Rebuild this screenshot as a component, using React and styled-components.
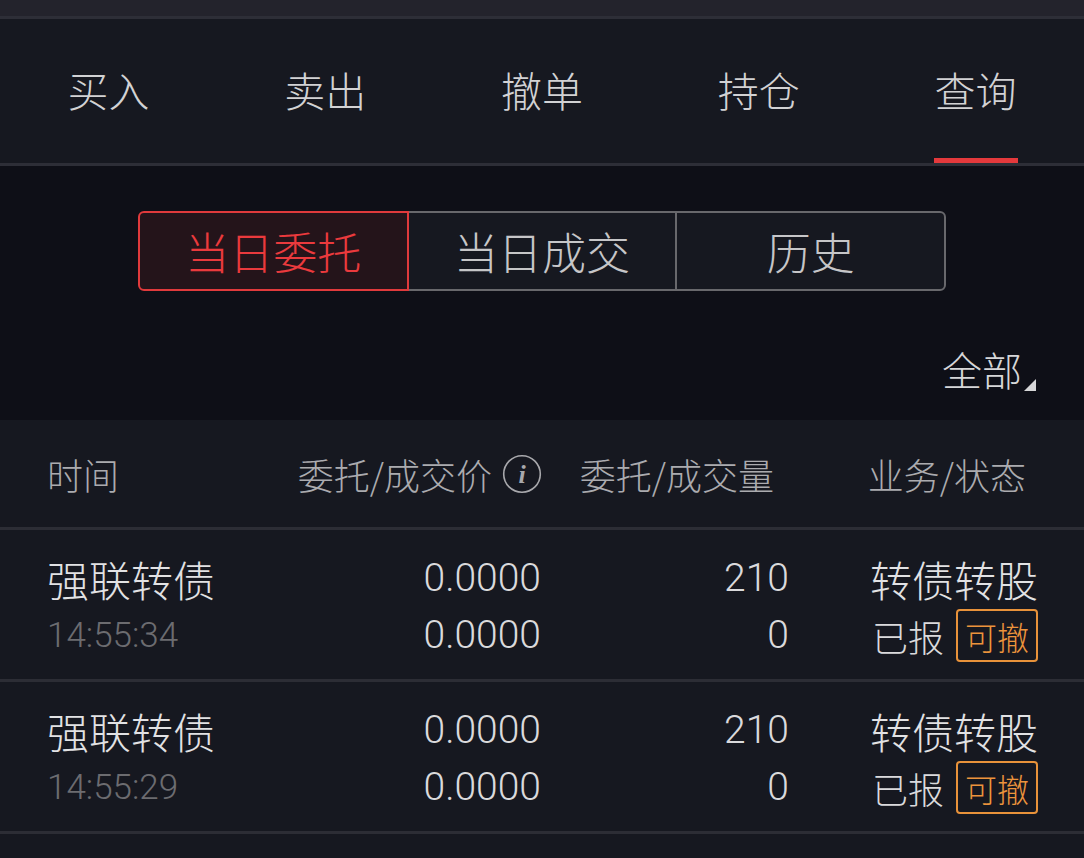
import styled, { createGlobalStyle } from "styled-components";

const GlobalStyle = createGlobalStyle`
  body {
    margin: 0;
    background: #161820;
    font-family: "Noto Sans CJK SC", "Noto Sans", sans-serif;
  }
`;

const CJK = `"Noto Sans CJK SC", "Noto Sans", sans-serif`;
const NUM = `Roboto, "Noto Sans CJK SC", sans-serif`;

const TABS = [ "买入", "卖出", "撤单", "持仓", "查询" ];
const SEGMENTS = [ "当日委托", "当日成交", "历史" ];
const ORDERS = [
    { name: "强联转债", time: "14:55:34", price: "0.0000", dealPrice: "0.0000", qty: "210", dealQty: "0", biz: "转债转股", state: "已报" },
    { name: "强联转债", time: "14:55:29", price: "0.0000", dealPrice: "0.0000", qty: "210", dealQty: "0", biz: "转债转股", state: "已报" },
];

function InfoIcon () {
    return (
        <svg width="40" height="40" viewBox="0 0 40 40">
            <circle cx="20" cy="20" r="18.3" fill="none" stroke="#a8a8ac" strokeWidth="1.6" />
            <text x="20" y="29" textAnchor="middle" fill="#a8a8ac" fontFamily="'Liberation Serif', serif" fontStyle="italic" fontWeight="bold" fontSize="26">i</text>
        </svg>
    );
}

function App () {
    return (
        <Page>
            <GlobalStyle />
            <TopStrip />
            <TabBar>
                { TABS.map( ( t, i ) => (
                    <Tab key={ t } active={ i === 4 }>{ t }</Tab>
                ) ) }
            </TabBar>
            <FilterArea>
                <Segmented>
                    { SEGMENTS.map( ( s, i ) => (
                        <Segment key={ s } active={ i === 0 }>{ s }</Segment>
                    ) ) }
                </Segmented>
                <FilterRow>
                    <AllFilter>全部<Corner /></AllFilter>
                </FilterRow>
            </FilterArea>
            <HeaderRow>
                <HeadCell>时间</HeadCell>
                <HeadCell align="right">委托/成交价<InfoWrap><InfoIcon /></InfoWrap></HeadCell>
                <HeadCell align="right" pad={ 15 }>委托/成交量</HeadCell>
                <HeadCell align="right" pad={ 12 }>业务/状态</HeadCell>
            </HeaderRow>
            { ORDERS.map( ( o ) => (
                <OrderRow key={ o.time }>
                    <Cell>
                        <Name>{ o.name }</Name>
                        <Time>{ o.time }</Time>
                    </Cell>
                    <Cell align="right">
                        <Num>{ o.price }</Num>
                        <Num>{ o.dealPrice }</Num>
                    </Cell>
                    <Cell align="right">
                        <Num>{ o.qty }</Num>
                        <Num>{ o.dealQty }</Num>
                    </Cell>
                    <Cell align="right">
                        <Name>{ o.biz }</Name>
                        <StateLine>
                            { o.state }
                            <Badge>可撤</Badge>
                        </StateLine>
                    </Cell>
                </OrderRow>
            ) ) }
        </Page>
    );
}

const Page = styled.div`
  width: 1084px;
  min-height: 858px;
  background: #161820;
`;

const TopStrip = styled.div`
  height: 16px;
  background: #23232c;
  border-bottom: 3px solid #2d2e37;
`;

const TabBar = styled.nav`
  display: grid;
  grid-template-columns: repeat(5, 1fr);
  height: 144px;
  background: #161820;
  border-bottom: 3px solid #2d2e37;
`;

const Tab = styled.div`
  position: relative;
  display: flex;
  align-items: center;
  justify-content: center;
  padding-bottom: 4px;
  font-family: ${ CJK };
  font-weight: 300;
  font-size: 41px;
  color: #d2d2d4;
  &::after {
    content: "";
    display: ${ ( p ) => ( p.active ? "block" : "none" ) };
    position: absolute;
    bottom: 0;
    left: 50%;
    width: 84px;
    height: 5px;
    margin-left: -42px;
    background: #e4393c;
  }
`;

const FilterArea = styled.section`
  background: #0e0f17;
  height: 254px;
  padding-top: 45px;
  box-sizing: border-box;
`;

const Segmented = styled.div`
  display: flex;
  width: 808px;
  height: 80px;
  margin: 0 auto;
`;

const Segment = styled.div`
  position: relative;
  z-index: ${ ( p ) => ( p.active ? 1 : 0 ) };
  flex: 1;
  display: flex;
  align-items: center;
  justify-content: center;
  margin-left: -2px;
  border: 2px solid ${ ( p ) => ( p.active ? "#e03a3c" : "#68686c" ) };
  background: ${ ( p ) => ( p.active ? "#24141a" : "#161820" ) };
  color: ${ ( p ) => ( p.active ? "#ea3a3d" : "#c6c6c8" ) };
  font-family: ${ CJK };
  font-weight: 300;
  font-size: 44px;
  &:first-child {
    margin-left: 0;
    border-radius: 6px 0 0 6px;
  }
  &:last-child {
    border-radius: 0 6px 6px 0;
  }
`;

const FilterRow = styled.div`
  display: flex;
  justify-content: flex-end;
  padding: 56px 48px 0 0;
`;

const AllFilter = styled.div`
  position: relative;
  font-family: ${ CJK };
  font-weight: 300;
  font-size: 40px;
  line-height: 44px;
  color: #d6d6d8;
  padding-right: 14px;
`;

const Corner = styled.span`
  position: absolute;
  right: 0;
  bottom: 0;
  width: 0;
  height: 0;
  border-left: 12px solid transparent;
  border-bottom: 12px solid #d6d6d8;
`;

const Grid = styled.div`
  display: grid;
  grid-template-columns: 230px 264px 248px 1fr;
  padding: 0 46px 0 47px;
  border-bottom: 3px solid #2c2d35;
  background: #161820;
`;

const HeaderRow = styled( Grid )`
  height: 107px;
  align-items: center;
`;

const HeadCell = styled.div`
  display: flex;
  align-items: center;
  justify-content: ${ ( p ) => ( p.align === "right" ? "flex-end" : "flex-start" ) };
  padding-right: ${ ( p ) => p.pad || 0 }px;
  font-family: ${ CJK };
  font-weight: 300;
  font-size: 36px;
  color: #ababaf;
`;

const InfoWrap = styled.span`
  display: flex;
  margin-left: 10px;
  margin-right: -1px;
`;

const OrderRow = styled( Grid )`
  height: 152px;
  box-sizing: border-box;
  padding-top: 20px;
`;

const Cell = styled.div`
  display: flex;
  flex-direction: column;
  align-items: ${ ( p ) => ( p.align === "right" ? "flex-end" : "flex-start" ) };
`;

const Name = styled.div`
  height: 57px;
  line-height: 57px;
  font-family: ${ CJK };
  font-weight: 300;
  font-size: 42px;
  color: #e2e2e4;
`;

const Time = styled.div`
  height: 57px;
  line-height: 57px;
  font-family: ${ NUM };
  font-weight: 300;
  font-size: 35px;
  color: #6c6c70;
`;

const Num = styled.div`
  height: 57px;
  line-height: 57px;
  font-family: ${ NUM };
  font-weight: 300;
  font-size: 39px;
  color: #dadadc;
`;

const StateLine = styled.div`
  display: flex;
  align-items: center;
  gap: 12px;
  height: 57px;
  font-family: ${ CJK };
  font-weight: 300;
  font-size: 36px;
  color: #dadadc;
`;

const Badge = styled.span`
  display: flex;
  align-items: center;
  justify-content: center;
  width: 82px;
  height: 53px;
  box-sizing: border-box;
  border: 2px solid #e8923a;
  border-radius: 4px;
  color: #ec943c;
  font-size: 32px;
`;

export default App;
